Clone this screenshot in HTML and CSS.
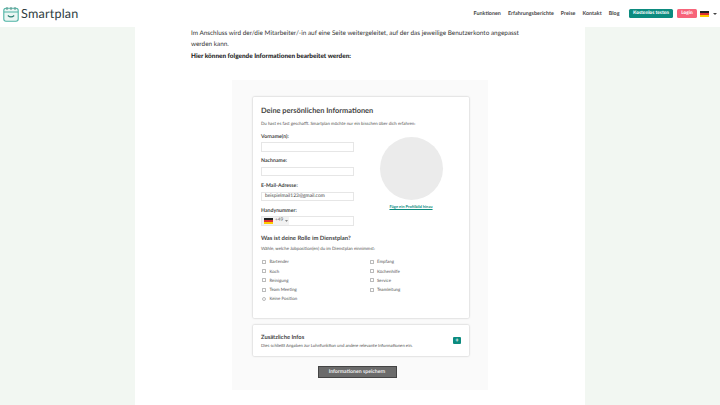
FILE: index.html
```html
<!DOCTYPE html>
<html lang="de">
<head>
<meta charset="utf-8">
<title>Smartplan</title>
<link rel="stylesheet" href="styles.css">
</head>
<body>
<header class="topbar">
  <a class="brand">
    <svg class="logo" width="16" height="16" viewBox="0 0 16 16" fill="none">
      <rect x="0.8" y="2.2" width="14.4" height="13" rx="2.2" fill="#eaf6f3" stroke="#4db3a4" stroke-width="1.1"/>
      <path d="M1 6h14" stroke="#4db3a4" stroke-width="1"/>
      <path d="M4 1v3M8 1v3M12 1v3" stroke="#5a8f88" stroke-width="1"/>
      <path d="M4.8 9.5q3.2 2.8 6.4 0" stroke="#2b7f74" stroke-width="1.1"/>
    </svg>
    <span class="brand-name">Smartplan</span>
  </a>
  <nav class="nav">
    <a>Funktionen</a>
    <a>Erfahrungsberichte</a>
    <a>Preise</a>
    <a>Kontakt</a>
    <a>Blog</a>
  </nav>
  <a class="pill pill-teal">Kostenlos testen</a>
  <a class="pill pill-pink">Login</a>
  <span class="lang">
    <svg class="flag" width="9" height="6" viewBox="0 0 9 6"><rect width="9" height="2" fill="#222"/><rect y="2" width="9" height="2" fill="#d33"/><rect y="4" width="9" height="2" fill="#fc0"/></svg>
    <svg class="caret" width="4" height="2" viewBox="0 0 4 2"><path d="M0 0h4L2 2z" fill="#444"/></svg>
  </span>
</header>
<div class="page">
  <main class="sheet">
    <p class="copy">Im Anschluss wird der/die Mitarbeiter/-in auf eine Seite weitergeleitet, auf der das jeweilige Benutzerkonto angepasst werden kann.</p>
    <p class="copy copy-strong">Hier können folgende Informationen bearbeitet werden:</p>
    <section class="shot">
      <div class="card card-main">
        <h2 class="title">Deine persönlichen Informationen</h2>
        <p class="hint">Du hast es fast geschafft. Smartplan möchte nur ein bisschen über dich erfahren:</p>
        <div class="fields">
          <div class="field-col">
            <label class="label">Vorname(n):</label>
            <div class="input"></div>
            <label class="label">Nachname:</label>
            <div class="input"></div>
            <label class="label">E-Mail-Adresse:</label>
            <div class="input">beispielmail123@gmail.com</div>
            <label class="label">Handynummer:</label>
            <div class="input input-phone">
              <span class="dial">
                <svg width="9" height="6" viewBox="0 0 9 6"><rect width="9" height="2" fill="#222"/><rect y="2" width="9" height="2" fill="#d33"/><rect y="4" width="9" height="2" fill="#fc0"/></svg>
                +49
                <svg width="3" height="2" viewBox="0 0 4 2"><path d="M0 0h4L2 2z" fill="#666"/></svg>
              </span>
            </div>
          </div>
          <div class="avatar-col">
            <div class="avatar"></div>
            <a class="avatar-link">Füge ein Profilbild hinzu</a>
          </div>
        </div>
        <h3 class="subtitle">Was ist deine Rolle im Dienstplan?</h3>
        <p class="hint hint-role">Wähle, welche Jobposition(en) du im Dienstplan einnimmst:</p>
        <div class="roles">
          <label class="role"><i class="box"></i>Bartender</label>
          <label class="role"><i class="box"></i>Empfang</label>
          <label class="role"><i class="box"></i>Koch</label>
          <label class="role"><i class="box"></i>Küchenhilfe</label>
          <label class="role"><i class="box"></i>Reinigung</label>
          <label class="role"><i class="box"></i>Service</label>
          <label class="role"><i class="box"></i>Team Meeting</label>
          <label class="role"><i class="box"></i>Teamleitung</label>
          <label class="role"><i class="box box-round"></i>Keine Position</label>
        </div>
      </div>
      <div class="card card-extra">
        <div>
          <h3 class="extra-title">Zusätzliche Infos</h3>
          <p class="extra-text">Dies schließt Angaben zur Lohnfunktion und andere relevante Informationen ein.</p>
        </div>
        <span class="plus">+</span>
      </div>
      <div class="save-row"><a class="save">Informationen speichern</a></div>
    </section>
  </main>
</div>
</body>
</html>
```
FILE: styles.css
```css
* { box-sizing: border-box; }
html, body { margin: 0; height: 405px; overflow: hidden; }
body { font-family: "Lato", "Liberation Sans", sans-serif; background: #fff; color: #333; text-rendering: geometricPrecision; }
p, h2, h3 { margin: 0; }

.topbar { height: 27px; display: flex; align-items: center; padding: 0 3px 0 3px; background: #fff; }
.brand { display: flex; align-items: center; gap: 2px; margin-right: auto; }
.logo { display: block; }
.brand-name { font-size: 12.6px; color: #2f3d3f; letter-spacing: .2px; }
.nav { display: flex; gap: 7px; margin-right: 9.5px; }
.nav a { font-size: 5.4px; font-weight: 700; color: #444; }
.pill { height: 9.5px; line-height: 9.5px; border-radius: 1.5px; font-size: 4.8px; font-weight: 900; color: #fff; text-align: center; }
.pill-teal { width: 44px; background: #0c8b7f; margin-right: 4px; }
.pill-pink { width: 20px; background: #f7647a; margin-right: 3px; }
.lang { display: flex; align-items: center; gap: 4px; }
.flag, .caret { display: block; }

.page { height: 378px; padding: 0 135px; background: #f2f7f2; }
.sheet { height: 378px; background: #fff; padding: 1px 56px 0; }
.copy { font-size: 6.4px; line-height: 11px; color: #333; }
.copy-strong { margin-top: 1px; font-weight: 900; color: #222; }

.shot { margin: 18px 0 0 41px; width: 256px; height: 310px; padding: 17px 19px 0 21px; background: #fafafa; }
.card { width: 216px; background: #fff; border-radius: 1px; box-shadow: 0 0 2px rgba(0,0,0,.3); }
.card-main { height: 221px; padding: 10px 8px 0; }
.title { font-size: 7.4px; line-height: 8px; font-weight: 700; color: #444; }
.hint { margin-top: 6px; font-size: 4.4px; line-height: 6px; color: #555; }
.fields { display: flex; margin-top: 6.5px; }
.field-col { width: 93px; }
.label { display: block; margin-top: 6.8px; font-size: 5.2px; line-height: 6px; font-weight: 700; color: #444; }
.label:first-child { margin-top: 0; }
.input { height: 9.5px; margin-top: 2.5px; padding-left: 3px; border: 1px solid #e6e6e6; font-size: 4.95px; line-height: 7.5px; color: #444; }
.input-phone { padding: 0; display: flex; }
.dial { display: flex; align-items: center; gap: 2px; padding: 0 1px 0 2px; background: #f2f2f2; font-size: 4.8px; color: #666; }
.avatar-col { width: 100px; margin-left: 7px; display: flex; flex-direction: column; align-items: center; padding-top: 3.5px; }
.avatar { width: 63px; height: 63px; border-radius: 50%; background: #ebebeb; }
.avatar-link { margin-top: 3.5px; font-size: 4.05px; line-height: 6px; font-weight: 700; color: #0c8b7f; text-decoration: underline; }
.subtitle { margin-top: 9.5px; font-size: 5.9px; line-height: 8px; font-weight: 700; color: #444; }
.hint-role { margin-top: 3px; }
.roles { display: grid; grid-template-columns: 107.5px 1fr; row-gap: 3.25px; margin-top: 6.5px; }
.role { display: flex; align-items: center; gap: 3.5px; height: 6px; font-size: 4.4px; color: #555; }
.box { display: block; width: 4px; height: 4px; margin-left: 1px; border: .7px solid #bbb; border-radius: .5px; }
.box-round { border-radius: 50%; }

.card-extra { height: 31px; margin-top: 7px; padding: 9px 8px 0; display: flex; justify-content: space-between; align-items: flex-start; }
.extra-title { font-size: 5.8px; line-height: 7px; font-weight: 700; color: #444; }
.extra-text { margin-top: 1.5px; font-size: 4.3px; line-height: 6px; color: #555; }
.plus { width: 8px; height: 7px; margin-top: 3px; border-radius: 1px; background: #0c8b7f; color: #fff; font-size: 6px; line-height: 7px; font-weight: 700; text-align: center; }

.save-row { display: flex; justify-content: center; margin-top: 10px; padding-right: 8px; }
.save { width: 79px; height: 12px; background: #6b6b6b; border: .5px solid #444; font-size: 5.2px; line-height: 11px; font-weight: 700; color: #eee; text-align: center; }
```
